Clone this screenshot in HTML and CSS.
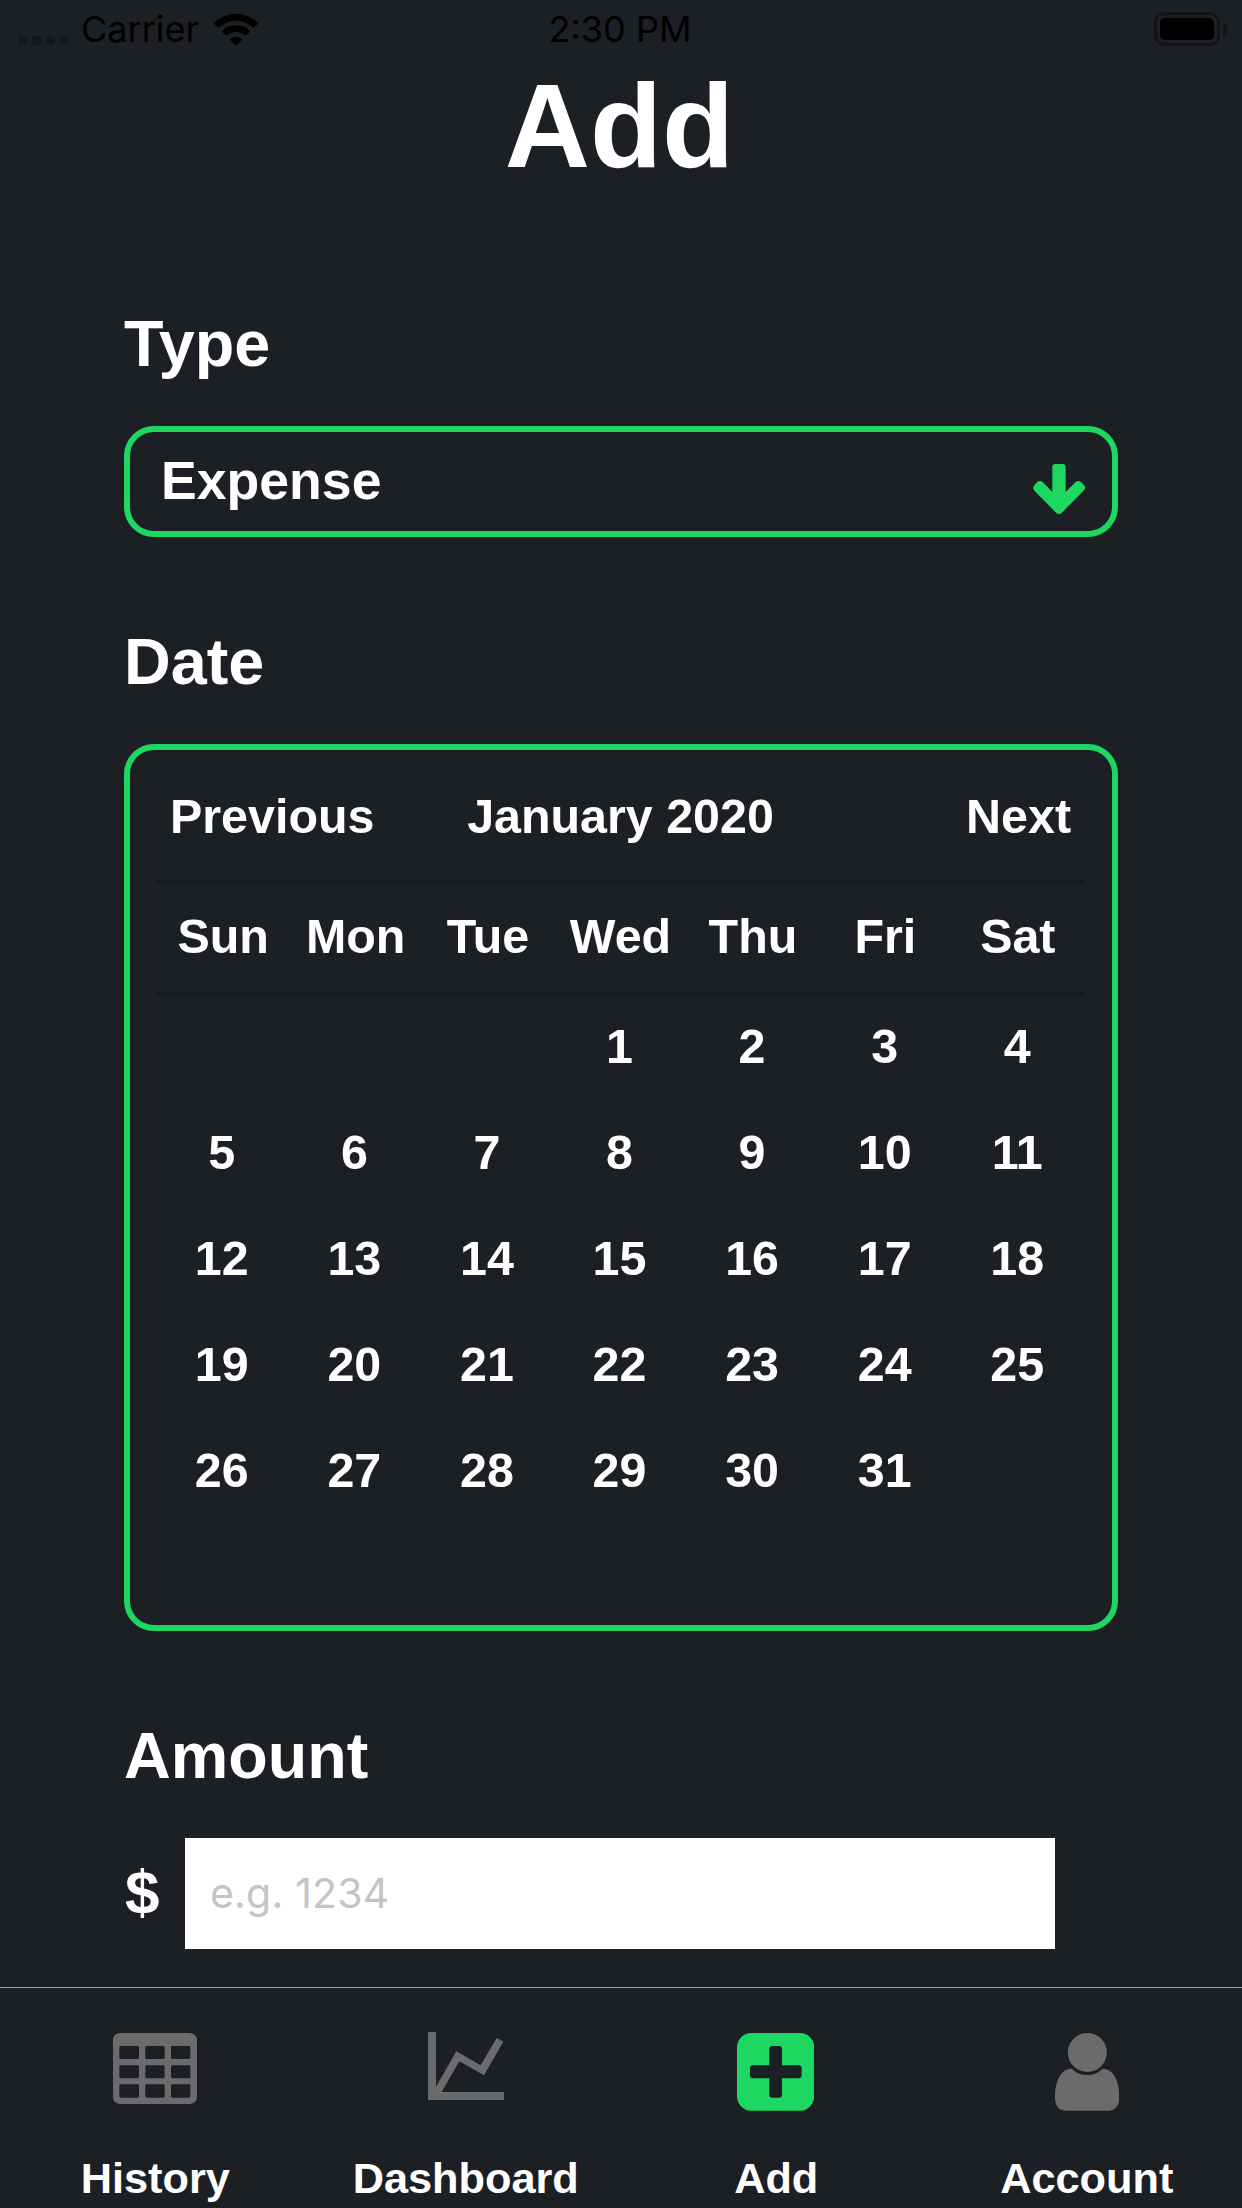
FILE: index.html
```
<!DOCTYPE html>
<html lang="en">
<head>
<meta charset="utf-8">
<title>Add</title>
<link rel="stylesheet" href="styles.css">
</head>
<body>
<div class="screen">
  <header class="status">
    <div class="status-left">
      <span class="signal"><i></i><i></i><i></i><i></i></span>
      <span class="carrier">Carrier</span>
      <svg class="wifi" viewBox="0 0 46 33" width="46" height="33">
        <path d="M0.6 10.2A31.5 31.5 0 0 1 45.4 10.2L40.6 15.2A24.8 24.8 0 0 0 5.4 15.2Z"/>
        <path d="M8.6 18.2A20.4 20.4 0 0 1 37.4 18.2L32.6 23A13.7 13.7 0 0 0 13.4 23Z"/>
        <path d="M16.3 26.2A9.6 9.6 0 0 1 29.7 26.2L23 33Z"/>
      </svg>
    </div>
    <span class="time">2:30 PM</span>
    <div class="power"><span class="battery"></span><span class="nub"></span></div>
  </header>

  <main class="content">
    <h1 class="title">Add</h1>

    <section class="field">
      <h2 class="label">Type</h2>
      <div class="select">
        <span>Expense</span>
        <svg class="arrow" viewBox="0 0 157 151" width="52.3" height="50.3">
          <path d="M68 0H88Q98 0 98 10V84L127 55Q136 47 145 55L152 62Q161 71 152 80L86 147Q78 155 70 147L5 81Q-4 72 5 63L12 55Q21 47 30 55L58 84V10Q58 0 68 0Z"/>
        </svg>
      </div>
    </section>

    <section class="field">
      <h2 class="label">Date</h2>
      <div class="calendar">
        <div class="month"><span>Previous</span><span>January 2020</span><span class="next">Next</span></div>
        <div class="weekdays">
          <span>Sun</span><span>Mon</span><span>Tue</span><span>Wed</span><span>Thu</span><span>Fri</span><span>Sat</span>
        </div>
        <div class="days">
          <span class="first">1</span><span>2</span><span>3</span><span>4</span>
          <span>5</span><span>6</span><span>7</span><span>8</span><span>9</span><span>10</span><span>11</span>
          <span>12</span><span>13</span><span>14</span><span>15</span><span>16</span><span>17</span><span>18</span>
          <span>19</span><span>20</span><span>21</span><span>22</span><span>23</span><span>24</span><span>25</span>
          <span>26</span><span>27</span><span>28</span><span>29</span><span>30</span><span>31</span>
        </div>
      </div>
    </section>

    <section class="field">
      <h2 class="label">Amount</h2>
      <div class="amount">
        <span class="currency">$</span>
        <input class="input" type="text" placeholder="e.g. 1234">
      </div>
    </section>
  </main>

  <nav class="tabs">
    <a class="tab">
      <span class="icon"><svg viewBox="0 0 252 213" width="84" height="71">
        <path fill-rule="evenodd" d="M24 0H228Q252 0 252 24V189Q252 213 228 213H24Q0 213 0 189V24Q0 0 24 0Z
          M23 39Q19 39 19 43V74Q19 78 23 78H74Q78 78 78 74V43Q78 39 74 39Z M101 39Q97 39 97 43V74Q97 78 101 78H151Q155 78 155 74V43Q155 39 151 39Z M178 39Q174 39 174 43V74Q174 78 178 78H228Q232 78 232 74V43Q232 39 228 39Z
          M23 97Q19 97 19 101V132Q19 136 23 136H74Q78 136 78 132V101Q78 97 74 97Z M101 97Q97 97 97 101V132Q97 136 101 136H151Q155 136 155 132V101Q155 97 151 97Z M178 97Q174 97 174 101V132Q174 136 178 136H228Q232 136 232 132V101Q232 97 228 97Z
          M23 154Q19 154 19 158V190Q19 194 23 194H74Q78 194 78 190V158Q78 154 74 154Z M101 154Q97 154 97 158V190Q97 194 101 194H151Q155 194 155 190V158Q155 154 151 154Z M178 154Q174 154 174 158V190Q174 194 178 194H228Q232 194 232 190V158Q232 154 228 154Z"/>
      </svg></span>
      <span>History</span>
    </a>
    <a class="tab">
      <span class="icon icon-chart"><svg viewBox="0 0 228 204" width="76" height="68">
        <path d="M0 0H24V164L85 58L158 100L206 18L226 29L168 130L94 88L41 180H228V204H0Z"/>
      </svg></span>
      <span>Dashboard</span>
    </a>
    <a class="tab">
      <span class="icon active"><svg viewBox="0 0 232 233" width="77.3" height="77.7">
        <path fill-rule="evenodd" d="M43 0H189A43 43 0 0 1 232 43V190A43 43 0 0 1 189 233H43A43 43 0 0 1 0 190V43A43 43 0 0 1 43 0Z
          M106 39Q97 39 97 48V97H48Q39 97 39 106V127Q39 136 48 136H97V185Q97 194 106 194H126Q135 194 135 185V136H184Q194 136 194 127V106Q194 97 184 97H135V48Q135 39 126 39Z"/>
      </svg></span>
      <span>Add</span>
    </a>
    <a class="tab">
      <span class="icon"><svg viewBox="0 0 193 233" width="64.3" height="77.7">
        <circle cx="97" cy="58.5" r="58.5"/>
        <path d="M50 107C16 107 0 147 0 193Q0 233 33 233H160Q193 233 193 193C193 147 178 107 143 107Q124 126 97 126Q69 126 50 107Z"/>
      </svg></span>
      <span>Account</span>
    </a>
  </nav>
</div>
</body>
</html>
```
FILE: styles.css
```
* { box-sizing: border-box; }

body {
  margin: 0;
  background: #1c1f24;
  color: #fff;
  font-family: "Liberation Sans", Arial, sans-serif;
  font-weight: 700;
}

.screen {
  display: flex;
  flex-direction: column;
  width: 1242px;
  height: 2208px;
  overflow: hidden;
}

.status {
  display: grid;
  grid-template-columns: 1fr auto 1fr;
  align-items: center;
  height: 60px;
  padding: 0 15px 2px 18px;
  color: #000;
  font: 400 36px/44px Inter, sans-serif;
}

.status-left { display: flex; align-items: center; }
.signal { display: flex; gap: 5px; padding-top: 23px; }
.signal i { width: 9px; height: 9px; border-radius: 3px; background: #15171b; }
.carrier { margin-left: 12px; }
.wifi { margin-left: 14px; }
.time { padding-right: 5px; }

.power { display: flex; align-items: center; justify-content: flex-end; gap: 3px; }
.battery {
  width: 66px;
  height: 34px;
  padding: 3px;
  border: 3px solid #121417;
  border-radius: 10px;
}
.battery::before {
  content: "";
  display: block;
  height: 22px;
  border-radius: 5px;
  background: #000;
}
.nub { width: 4px; height: 13px; border-radius: 0 5px 5px 0; background: #121417; }

.content { flex: 1; padding: 0 124px; }

.title {
  margin: 0 0 113px;
  padding: 1px 3px 0 0;
  font-size: 118px;
  line-height: 131px;
  text-align: center;
}

.field + .field { margin-top: 86px; }

.label { margin: 0 0 45px; padding-top: 1px; font-size: 64.7px; line-height: 75px; }

.select {
  display: flex;
  align-items: center;
  justify-content: space-between;
  height: 111px;
  padding: 0 27px 3px 31px;
  border: 6px solid #1ed760;
  border-radius: 30px;
  font-size: 53.6px;
}
.arrow { margin-top: 18px; fill: #1ed760; }

.calendar {
  height: 887px;
  padding: 0 27px;
  border: 6px solid #1ed760;
  border-radius: 30px;
  font-size: 48.4px;
}

.month {
  display: grid;
  grid-template-columns: 1fr auto 1fr;
  align-items: center;
  height: 133px;
  padding: 1px 14px 0 13px;
  border-bottom: 3px solid #17191d;
}
.next { text-align: right; }

.weekdays, .days {
  display: grid;
  grid-template-columns: repeat(7, 1fr);
  align-items: center;
  text-align: center;
}
.weekdays { height: 112px; padding: 0 1px 4px 0; border-bottom: 3px solid #17191d; }
.days { grid-auto-rows: 106px; }
.days span { padding: 0 3px 5px 0; }
.first { grid-column-start: 4; }

.amount { display: flex; align-items: center; height: 111px; }
.currency { width: 61px; padding: 0 0 3px 1px; font-size: 62px; line-height: 76px; }
.input {
  width: 870px;
  height: 111px;
  padding: 0 25px 2px;
  border: 0;
  border-radius: 0;
  background: #fff;
  font: 400 41px Inter, sans-serif;
  letter-spacing: 0.2px;
}
.input::placeholder { color: #c4c4c6; opacity: 1; }

.tabs {
  display: grid;
  grid-template-columns: repeat(4, 1fr);
  height: 221px;
  border-top: 1px solid #9b9c9f;
}
.tab {
  display: flex;
  flex-direction: column;
  align-items: center;
  font-size: 43.3px;
  line-height: 50px;
}
.icon { height: 120px; margin: 45px 0 0; fill: #6b6b6b; }
.icon svg { display: block; }
.icon-chart { margin-top: 44px; height: 121px; }
.active { padding-right: 1px; fill: #1ed760; }
```
